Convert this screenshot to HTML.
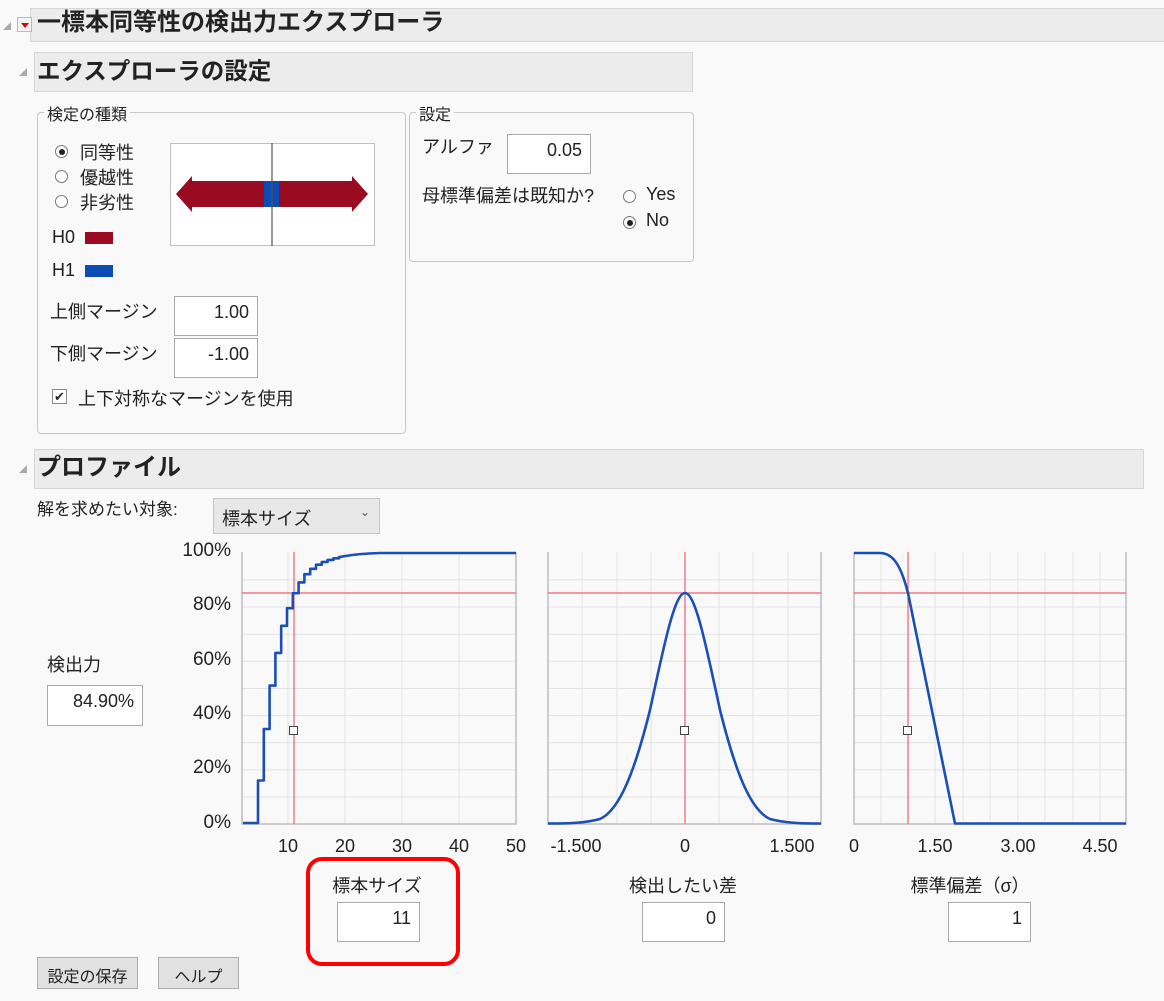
<!DOCTYPE html>
<html><head><meta charset="utf-8"><style>
body{margin:0;width:1164px;height:1001px;background:#f9f9f9;position:relative;overflow:hidden;font-family:"Liberation Sans","Noto Sans CJK JP",sans-serif;color:#222;}
.a{position:absolute;white-space:nowrap}
.hdr{position:absolute;background:#ececec;border:1px solid #d6d6d6;}
.t{font-size:18px}
.box{position:absolute;border:1px solid #c8c8c8;border-radius:4px}
.lg{position:absolute;background:#f9f9f9;padding:0 3px;font-size:16px}
.inp{position:absolute;background:#fff;border:1px solid #a9a9a9;box-sizing:border-box;text-align:right;padding:5px 8px 0 0;font-size:18px}
.rad{position:absolute;width:13px;height:13px;border:1px solid #777;border-radius:50%;background:#fff;box-sizing:border-box}
.rad.on::after{content:"";position:absolute;left:2.5px;top:2.5px;width:6px;height:6px;border-radius:50%;background:#222}
.btn{position:absolute;background:#e1e1e1;border:1px solid #adadad;box-sizing:border-box;font-size:16px;text-align:center;padding-top:5px}
.tri{position:absolute;width:0;height:0;border-left:8px solid transparent;border-bottom:8px solid #aaa}
.yl{position:absolute;width:70px;text-align:right;font-size:19px}
.xl{position:absolute;font-size:18px;transform:translateX(-50%)}
</style></head><body>
<div class="hdr" style="left:30px;top:8px;width:1134px;height:32px"></div>
<div class="tri" style="left:3px;top:22px"></div>
<div class="a" style="left:17px;top:17px;width:15px;height:15px;border:1px solid #bbb;background:#f4f4f4;box-sizing:border-box"><div style="position:absolute;left:3px;top:5px;border-left:4px solid transparent;border-right:4px solid transparent;border-top:5px solid #d00"></div></div>
<div class="a" style="left:37px;top:7px;font-size:24px;font-weight:bold;line-height:32px">一標本同等性の検出力エクスプローラ</div>

<div class="hdr" style="left:34px;top:52px;width:657px;height:38px"></div>
<div class="tri" style="left:19px;top:68px"></div>
<div class="a" style="left:37px;top:52px;font-size:23.5px;font-weight:bold;line-height:38px">エクスプローラの設定</div>

<div class="box" style="left:37px;top:112px;width:367px;height:320px"></div>
<div class="lg" style="left:44px;top:101px">検定の種類</div>
<div class="rad on" style="left:55px;top:145px"></div><div class="a t" style="left:80px;top:139px">同等性</div>
<div class="rad" style="left:55px;top:170px"></div><div class="a t" style="left:80px;top:164px">優越性</div>
<div class="rad" style="left:55px;top:195px"></div><div class="a t" style="left:80px;top:189px">非劣性</div>
<div class="a t" style="left:52px;top:227px">H0</div><div class="a" style="left:85px;top:232px;width:28px;height:12px;background:#9a0a20"></div>
<div class="a t" style="left:52px;top:260px">H1</div><div class="a" style="left:85px;top:265px;width:28px;height:12px;background:#0b4bb3"></div>
<svg class="a" style="left:170px;top:143px" width="205" height="103">
<rect x="0.5" y="0.5" width="204" height="102" fill="#fff" stroke="#c0c0c0"/>
<polygon points="6,51 22,33 22,38 182,38 182,33 198,51 182,69 182,64 22,64 22,69" fill="#9a0a20"/>
<rect x="94" y="38" width="15" height="26" fill="#0b4bb3"/>
<line x1="102" y1="0" x2="102" y2="103" stroke="#555" stroke-width="1.2"/>
</svg>
<div class="a t" style="left:50px;top:298px">上側マージン</div><div class="inp" style="left:174px;top:296px;width:84px;height:40px">1.00</div>
<div class="a t" style="left:50px;top:340px">下側マージン</div><div class="inp" style="left:174px;top:338px;width:84px;height:40px">-1.00</div>
<div class="a" style="left:52px;top:389px;width:15px;height:15px;border:1px solid #888;background:#fff;box-sizing:border-box;font-size:13px;line-height:13px;text-align:center">✔</div>
<div class="a t" style="left:78px;top:385px">上下対称なマージンを使用</div>

<div class="box" style="left:409px;top:112px;width:283px;height:148px"></div>
<div class="lg" style="left:416px;top:101px">設定</div>
<div class="a t" style="left:422px;top:133px">アルファ</div><div class="inp" style="left:507px;top:134px;width:84px;height:40px">0.05</div>
<div class="a t" style="left:422px;top:182px">母標準偏差は既知か?</div>
<div class="rad" style="left:623px;top:190px"></div><div class="a t" style="left:646px;top:184px">Yes</div>
<div class="rad on" style="left:623px;top:216px"></div><div class="a t" style="left:646px;top:210px">No</div>

<div class="hdr" style="left:34px;top:449px;width:1108px;height:38px"></div>
<div class="tri" style="left:19px;top:465px"></div>
<div class="a" style="left:37px;top:449px;font-size:24px;font-weight:bold;line-height:38px">プロファイル</div>
<div class="a" style="left:37px;top:495px;font-size:17px">解を求めたい対象:</div>
<div class="a" style="left:213px;top:498px;width:167px;height:36px;background:#e8e8e8;border:1px solid #c4c4c4;box-sizing:border-box;font-size:18px;padding:6px 0 0 8px">標本サイズ<span style="position:absolute;right:9px;top:6px;font-size:12px;color:#555">⌄</span></div>

<div class="yl" style="left:161px;top:540px">100%</div>
<div class="yl" style="left:161px;top:594px">80%</div>
<div class="yl" style="left:161px;top:649px">60%</div>
<div class="yl" style="left:161px;top:703px">40%</div>
<div class="yl" style="left:161px;top:757px">20%</div>
<div class="yl" style="left:161px;top:812px">0%</div>
<div class="a t" style="left:47px;top:651px">検出力</div>
<div class="inp" style="left:47px;top:685px;width:96px;height:41px">84.90%</div>

<svg class="a" style="left:0;top:0" width="1164" height="860">
<g stroke="#e2e2e2" stroke-width="1">
<path d="M242,579.9H516M242,607H516M242,634.2H516M242,661.3H516M242,688.5H516M242,715.6H516M242,742.7H516M242,769.9H516M242,797H516M288,552V824M345,552V824M402,552V824M459,552V824"/>
<path d="M548,579.9H821M548,607H821M548,634.2H821M548,661.3H821M548,688.5H821M548,715.6H821M548,742.7H821M548,769.9H821M548,797H821M582,552V824M617,552V824M651,552V824M685,552V824M719,552V824M753,552V824M788,552V824"/>
<path d="M854,579.9H1126M854,607H1126M854,634.2H1126M854,661.3H1126M854,688.5H1126M854,715.6H1126M854,742.7H1126M854,769.9H1126M854,797H1126M881,552V824M908,552V824M935,552V824M963,552V824M990,552V824M1018,552V824M1045,552V824M1073,552V824M1100,552V824"/>
</g>
<g fill="none" stroke="#bdbdbd" stroke-width="1.5">
<path d="M242,552V824H516V552M548,552V824H821V552M854,552V824H1126V552"/>
</g>
<g stroke="#f06070" stroke-width="1.2">
<path d="M242,593H516M294,552V824M548,593H821M685,552V824M854,593H1126M908,552V824"/>
</g>
<g fill="none" stroke="#1a4fb5" stroke-width="2.6" stroke-linejoin="round">
<path d="M243,823H258V780.5H263.8V729H269.6V685.6H275.4V652.9H281.2V625.8H287V608.2H292.8V593.2H298.6V582.4H304.4V574.2H310.2V568.8H316V564.7H321.8V561.9H327.6V559.9H333.4V558.3H339.2V557C350,555 360,553.5 380,553H516"/>
<path d="M548,823.5C570,823.5 585,823 600,819 C620,810 635,770 650,710 C665,640 675,593 685,593 C695,593 705,640 720,710 C735,770 750,810 770,819 C785,823 800,823.5 821,823.5"/>
<path d="M854,553H880C895,553 902,570 908,593L955,823.5H1126"/>
</g>
<g fill="#fff" stroke="#444" stroke-width="1"><rect x="289.5" y="726.5" width="8" height="8"/><rect x="680.5" y="726.5" width="8" height="8"/><rect x="903.5" y="726.5" width="8" height="8"/></g>
</svg>
<div class="xl" style="left:288px;top:836px">10</div><div class="xl" style="left:345px;top:836px">20</div><div class="xl" style="left:402px;top:836px">30</div><div class="xl" style="left:459px;top:836px">40</div><div class="xl" style="left:516px;top:836px">50</div>
<div class="xl" style="left:576px;top:836px">-1.500</div><div class="xl" style="left:685px;top:836px">0</div><div class="xl" style="left:792px;top:836px">1.500</div>
<div class="xl" style="left:854px;top:836px">0</div><div class="xl" style="left:935px;top:836px">1.50</div><div class="xl" style="left:1018px;top:836px">3.00</div><div class="xl" style="left:1100px;top:836px">4.50</div>

<div class="xl t" style="left:377px;top:872px">標本サイズ</div>
<div class="inp" style="left:337px;top:902px;width:83px;height:40px">11</div>
<div class="xl t" style="left:683px;top:872px">検出したい差</div>
<div class="inp" style="left:642px;top:902px;width:83px;height:40px">0</div>
<div class="xl t" style="left:970px;top:872px">標準偏差（σ）</div>
<div class="inp" style="left:948px;top:902px;width:83px;height:40px">1</div>
<div class="a" style="left:306px;top:857px;width:154px;height:109px;border:4px solid #f00;border-radius:16px;box-sizing:border-box"></div>

<div class="btn" style="left:37px;top:957px;width:101px;height:32px">設定の保存</div>
<div class="btn" style="left:158px;top:957px;width:81px;height:32px">ヘルプ</div>
</body></html>
